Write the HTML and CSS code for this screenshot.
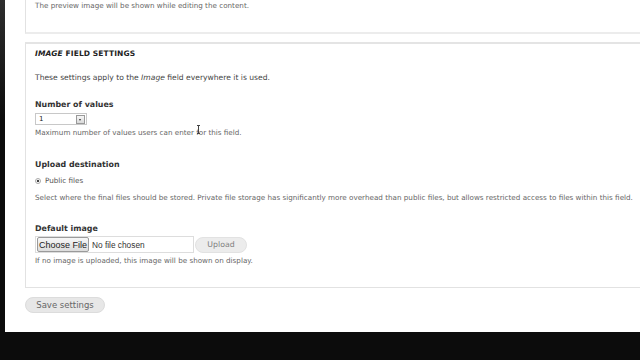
FILE: index.html
```html
<!DOCTYPE html>
<html lang="en">
<head>
  <meta charset="UTF-8">
  <title>Image field settings</title>
  <link rel="stylesheet" href="styles.css">
</head>
<body>

<div class="page">
  <div class="fieldset fieldset-top">
    <div class="description">The preview image will be shown while editing the content.</div>
  </div>

  <div class="fieldset fieldset-main">
    <div class="legend"><em>Image</em> field settings</div>
    <p class="intro">These settings apply to the <em>Image</em> field everywhere it is used.</p>

    <div class="form-item item-values">
      <label>Number of values</label>
      <div class="select"><span>1</span><span class="arrow"></span></div>
      <div class="description">Maximum number of values users can enter for this field.</div>
      <span class="ibeam"></span>
    </div>

    <div class="form-item item-dest">
      <label>Upload destination</label>
      <div class="radio"><span class="dot"></span>Public files</div>
      <div class="description">Select where the final files should be stored. Private file storage has significantly more overhead than public files, but allows restricted access to files within this field.</div>
    </div>

    <div class="form-item item-default">
      <label>Default image</label>
      <div class="file-row">
        <div class="file-box"><button class="choose">Choose File</button><span>No file chosen</span></div>
        <button class="upload">Upload</button>
      </div>
      <div class="description">If no image is uploaded, this image will be shown on display.</div>
    </div>
  </div>

  <button class="save">Save settings</button>
</div>

</body>
</html>
```

FILE: styles.css
```css
body {
  margin: 0;
  height: 360px;
  overflow: hidden;
  background: linear-gradient(#2e2e2e, #0c0c0c 120px);
  font-family: 'DejaVu Sans', sans-serif;
  font-size: 7.6px;
  color: #333;
}
.page {
  margin-left: 5px;
  height: 332px;
  box-sizing: border-box;
  background: #fff;
  padding-left: 20px;
  display: flex;
  flex-direction: column;
  align-items: flex-start;
}
.fieldset {
  align-self: stretch;
  margin-right: -20px;
  border: 1px solid #e2e2e2;
  padding-left: 9px;
  display: flex;
  flex-direction: column;
}
.fieldset-top {
  border-top: none;
  border-bottom: 2px solid #ececec;
  height: 34px;
  box-sizing: border-box;
}
.fieldset-main {
  margin-top: 8px;
  border-top: 2px solid #e4e4e4;
  padding-bottom: 20px;
}
.description {
  line-height: 12px;
  color: #666;
  font-size: 7.2px;
}
.legend {
  margin-top: 4px;
  line-height: 12px;
  text-transform: uppercase;
  font-size: 7.5px;
  font-weight: 600;
  color: #222;
  letter-spacing: 0.1px;
}
.legend em {
  font-style: italic;
}
.intro {
  margin: 12px 0 0;
  line-height: 12px;
  color: #444;
}
.form-item {
  position: relative;
  display: flex;
  flex-direction: column;
  align-items: flex-start;
}
.form-item label {
  line-height: 12px;
  font-weight: bold;
  font-size: 7.9px;
  color: #333;
}
.item-values { margin-top: 15px; }
.item-dest { margin-top: 20px; }
.item-default { margin-top: 19px; }

.select {
  margin-top: 2px;
  width: 52px;
  height: 12px;
  box-sizing: border-box;
  border: 1px solid #c8c8c8;
  display: flex;
  align-items: center;
  justify-content: space-between;
  padding-left: 3px;
  font-size: 7px;
  color: #222;
}
.select .arrow {
  width: 9px;
  height: 9px;
  margin-right: 1px;
  box-sizing: border-box;
  border: 1px solid #999;
  background: linear-gradient(#f6f6f6, #d9d9d9);
  position: relative;
}
.select .arrow::after {
  content: "";
  position: absolute;
  left: 2px;
  top: 3px;
  border-left: 1.5px solid transparent;
  border-right: 1.5px solid transparent;
  border-top: 2px solid #333;
}
.item-values .description { margin-top: 2px; }

.ibeam {
  position: absolute;
  left: 163px;
  top: 26px;
  width: 1px;
  height: 9px;
  background: #444;
}
.ibeam::before,
.ibeam::after {
  content: "";
  position: absolute;
  left: -1px;
  width: 3px;
  height: 1px;
  background: #444;
}
.ibeam::before { top: 0; }
.ibeam::after { bottom: 0; }

.radio {
  margin-top: 4px;
  line-height: 12px;
  display: flex;
  align-items: center;
  gap: 4px;
  color: #555;
  font-size: 7.2px;
}
.radio .dot {
  width: 6px;
  height: 6px;
  box-sizing: border-box;
  border: 1px solid #aaa;
  border-radius: 50%;
  background: radial-gradient(#444 1.2px, #fff 1.6px);
}
.item-dest .description { margin-top: 5px; }

.file-row {
  margin-top: 1px;
  display: flex;
  align-items: center;
  gap: 1px;
}
.file-box {
  width: 159px;
  height: 17px;
  box-sizing: border-box;
  border: 1px solid #ddd;
  display: flex;
  align-items: center;
  gap: 3px;
  padding-left: 1px;
  font-family: 'Liberation Sans', sans-serif;
  font-size: 8.3px;
  color: #333;
}
.choose {
  height: 15px;
  padding: 0 1px;
  border: 1px solid #9a9a9a;
  border-radius: 2px;
  background: linear-gradient(#f7f7f7, #dcdcdc);
  font-family: 'Liberation Sans', sans-serif;
  font-size: 9px;
  color: #222;
}
.upload {
  width: 52px;
  height: 16px;
  border: 1px solid #e2e2e2;
  border-radius: 8px;
  background: #ececec;
  font-family: 'DejaVu Sans', sans-serif;
  font-size: 7.8px;
  color: #808080;
}
.item-default .description { margin-top: 2px; }

.save {
  margin-top: 9px;
  width: 80px;
  height: 16px;
  border: 1px solid #dcdcdc;
  border-radius: 8px;
  background: #e7e7e7;
  font-family: 'DejaVu Sans', sans-serif;
  font-size: 8.5px;
  color: #666;
}
```
